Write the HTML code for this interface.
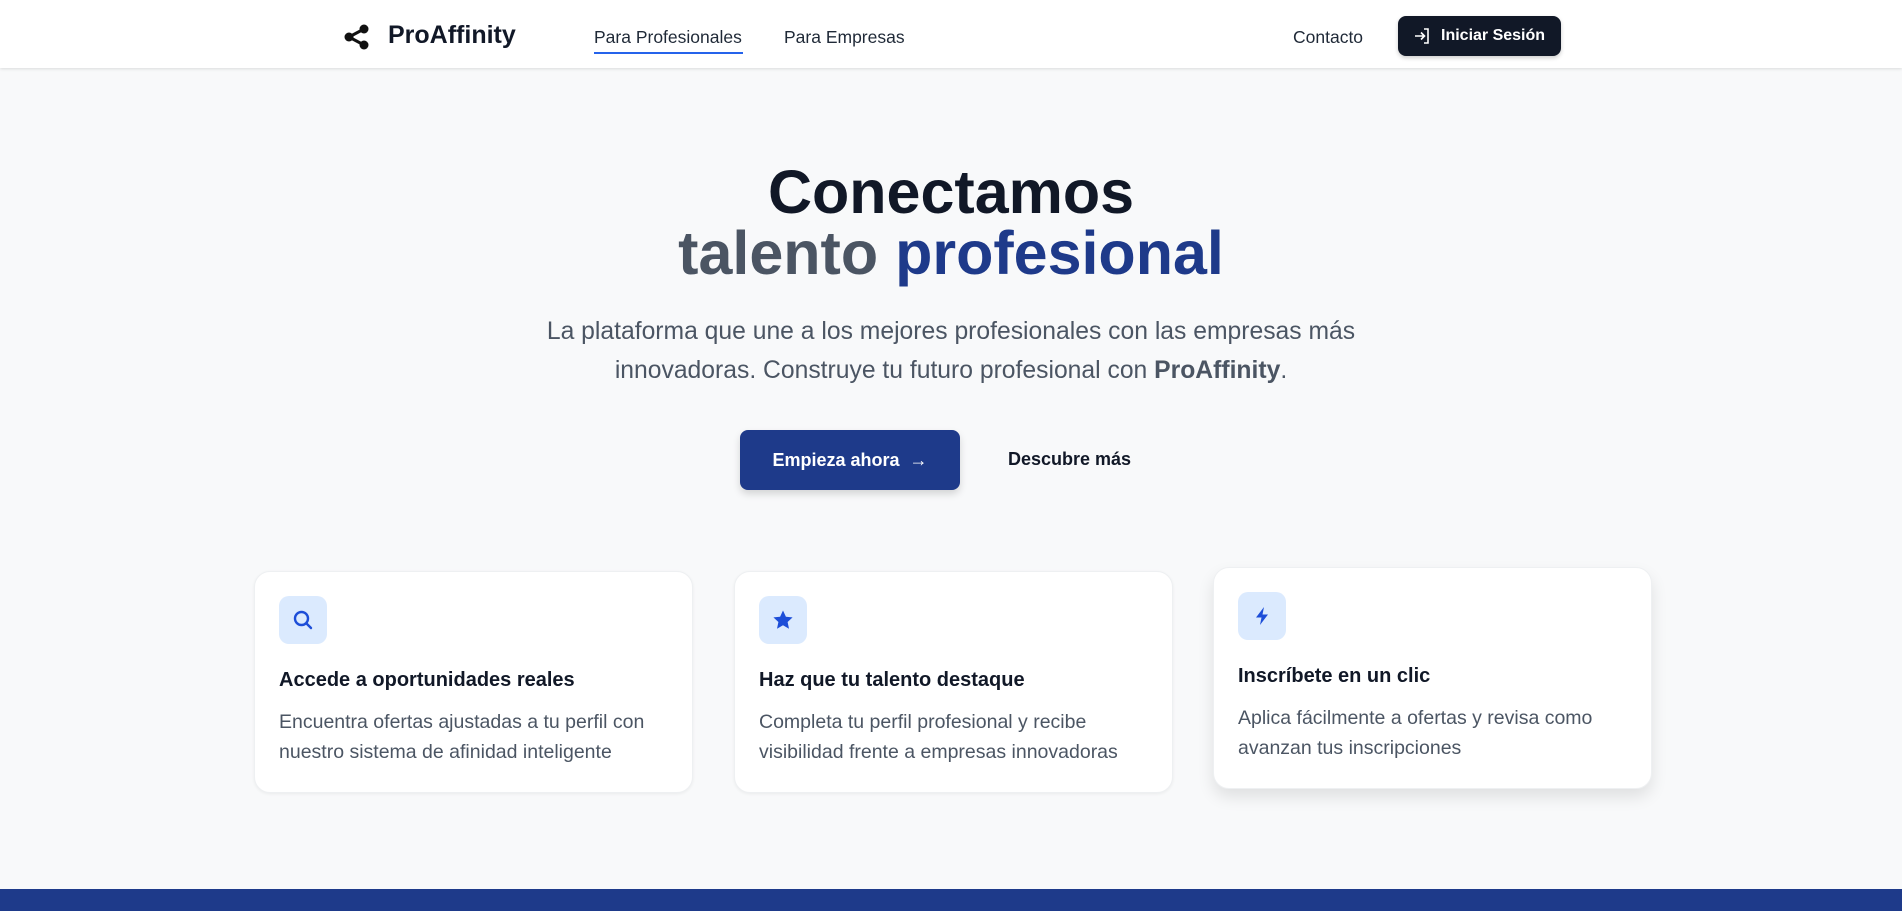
<!DOCTYPE html>
<html><head><meta charset="utf-8"><style>
*{margin:0;padding:0;box-sizing:border-box}
body{width:1902px;height:911px;overflow:hidden;background:#f8f9fa;font-family:"Liberation Sans",sans-serif;position:relative;color:#111827}
.hdr{position:absolute;left:0;top:0;width:1902px;height:68px;background:#fff;box-shadow:0 1px 3px rgba(0,0,0,.12)}
.abs{position:absolute}
.nav{font-size:17.5px;color:#1f2937}
.card{position:absolute;background:#fff;border-radius:16px;border:1px solid #eef0f2;box-shadow:0 1px 3px rgba(0,0,0,.06);width:439px;height:222px}
.ic{position:absolute;left:24px;top:24px;width:48px;height:48px;border-radius:10px;background:#dbeafe;display:flex;align-items:center;justify-content:center}
.ct{position:absolute;left:24px;top:97px;font-size:20px;font-weight:bold;color:#111827}
.cd{position:absolute;left:24px;top:135px;font-size:19.5px;line-height:30px;color:#4b5563;width:395px}
</style></head><body>
<div class="hdr">
 <svg class="abs" style="left:343px;top:24px" width="28" height="26" viewBox="0 0 28 26"><circle cx="21" cy="5" r="4.5" fill="#111"/><circle cx="6" cy="13" r="4.5" fill="#111"/><circle cx="21" cy="21" r="4.5" fill="#111"/><path d="M6 13L21 5M6 13L21 21" stroke="#111" stroke-width="3"/></svg>
 <div class="abs" style="left:388px;top:21px;font-size:25px;font-weight:bold;color:#111827">ProAffinity</div>
 <div class="abs nav" style="left:594px;top:27px">Para Profesionales</div>
 <div class="abs" style="left:594px;top:52px;width:149px;height:2px;background:#2563eb"></div>
 <div class="abs nav" style="left:784px;top:27px">Para Empresas</div>
 <div class="abs nav" style="left:1293px;top:27px">Contacto</div>
 <div class="abs" style="left:1398px;top:16px;width:163px;height:40px;background:#111827;border-radius:8px;box-shadow:0 2px 4px rgba(0,0,0,.2)">
  <svg class="abs" style="left:15px;top:11px" width="18" height="18" viewBox="0 0 18 18" fill="none" stroke="#fff" stroke-width="1.6"><path d="M2 9h9M8 5.5L11.5 9 8 12.5M11 2h4v14h-4"/></svg>
  <div class="abs" style="left:43px;top:11px;font-size:16px;font-weight:bold;color:#fff">Iniciar Sesión</div>
 </div>
</div>
<div class="abs" style="left:0;top:162px;width:1902px;text-align:center;font-size:61px;font-weight:bold;line-height:61px;letter-spacing:0">
 <div style="color:#111827">Conectamos</div>
 <div style="color:#4b5563">talento <span style="color:#1e3a8a">profesional</span></div>
</div>
<div class="abs" style="left:481px;top:312px;width:940px;text-align:center;font-size:24.7px;line-height:39px;color:#4b5563">La plataforma que une a los mejores profesionales con las empresas más innovadoras. Construye tu futuro profesional con <b>ProAffinity</b>.</div>
<div class="abs" style="left:740px;top:430px;width:220px;height:60px;background:#1e3a8a;border-radius:8px;box-shadow:0 4px 8px rgba(0,0,0,.15);color:#fff;font-size:18px;font-weight:bold;text-align:center;line-height:60px">Empieza ahora &nbsp;→</div>
<div class="abs" style="left:1008px;top:449px;font-size:18px;font-weight:bold;color:#111827">Descubre más</div>
<div class="card" style="left:254px;top:571px">
 <div class="ic"><svg width="24" height="24" viewBox="0 0 24 24" fill="none" stroke="#1d4ed8" stroke-width="2.4" stroke-linecap="round"><circle cx="10.5" cy="10.5" r="6.5"/><path d="M15.5 15.5L20 20"/></svg></div>
 <div class="ct">Accede a oportunidades reales</div>
 <div class="cd">Encuentra ofertas ajustadas a tu perfil con nuestro sistema de afinidad inteligente</div>
</div>
<div class="card" style="left:734px;top:571px">
 <div class="ic"><svg width="24" height="24" viewBox="0 0 24 24"><path d="M12 2.5l2.9 6.2 6.7.7-5 4.6 1.4 6.7L12 17.3 6 20.7l1.4-6.7-5-4.6 6.7-.7z" fill="#1d4ed8"/></svg></div>
 <div class="ct">Haz que tu talento destaque</div>
 <div class="cd">Completa tu perfil profesional y recibe visibilidad frente a empresas innovadoras</div>
</div>
<div class="card" style="left:1213px;top:567px;box-shadow:0 8px 16px rgba(0,0,0,.1)">
 <div class="ic"><svg width="24" height="24" viewBox="0 0 24 24"><path d="M14 3L6 13.5h5.5L10 21l8-10.5h-5.5z" fill="#1d4ed8"/></svg></div>
 <div class="ct">Inscríbete en un clic</div>
 <div class="cd">Aplica fácilmente a ofertas y revisa como avanzan tus inscripciones</div>
</div>
<div class="abs" style="left:0;top:889px;width:1902px;height:22px;background:#1e3a8a"></div>
</body></html>
